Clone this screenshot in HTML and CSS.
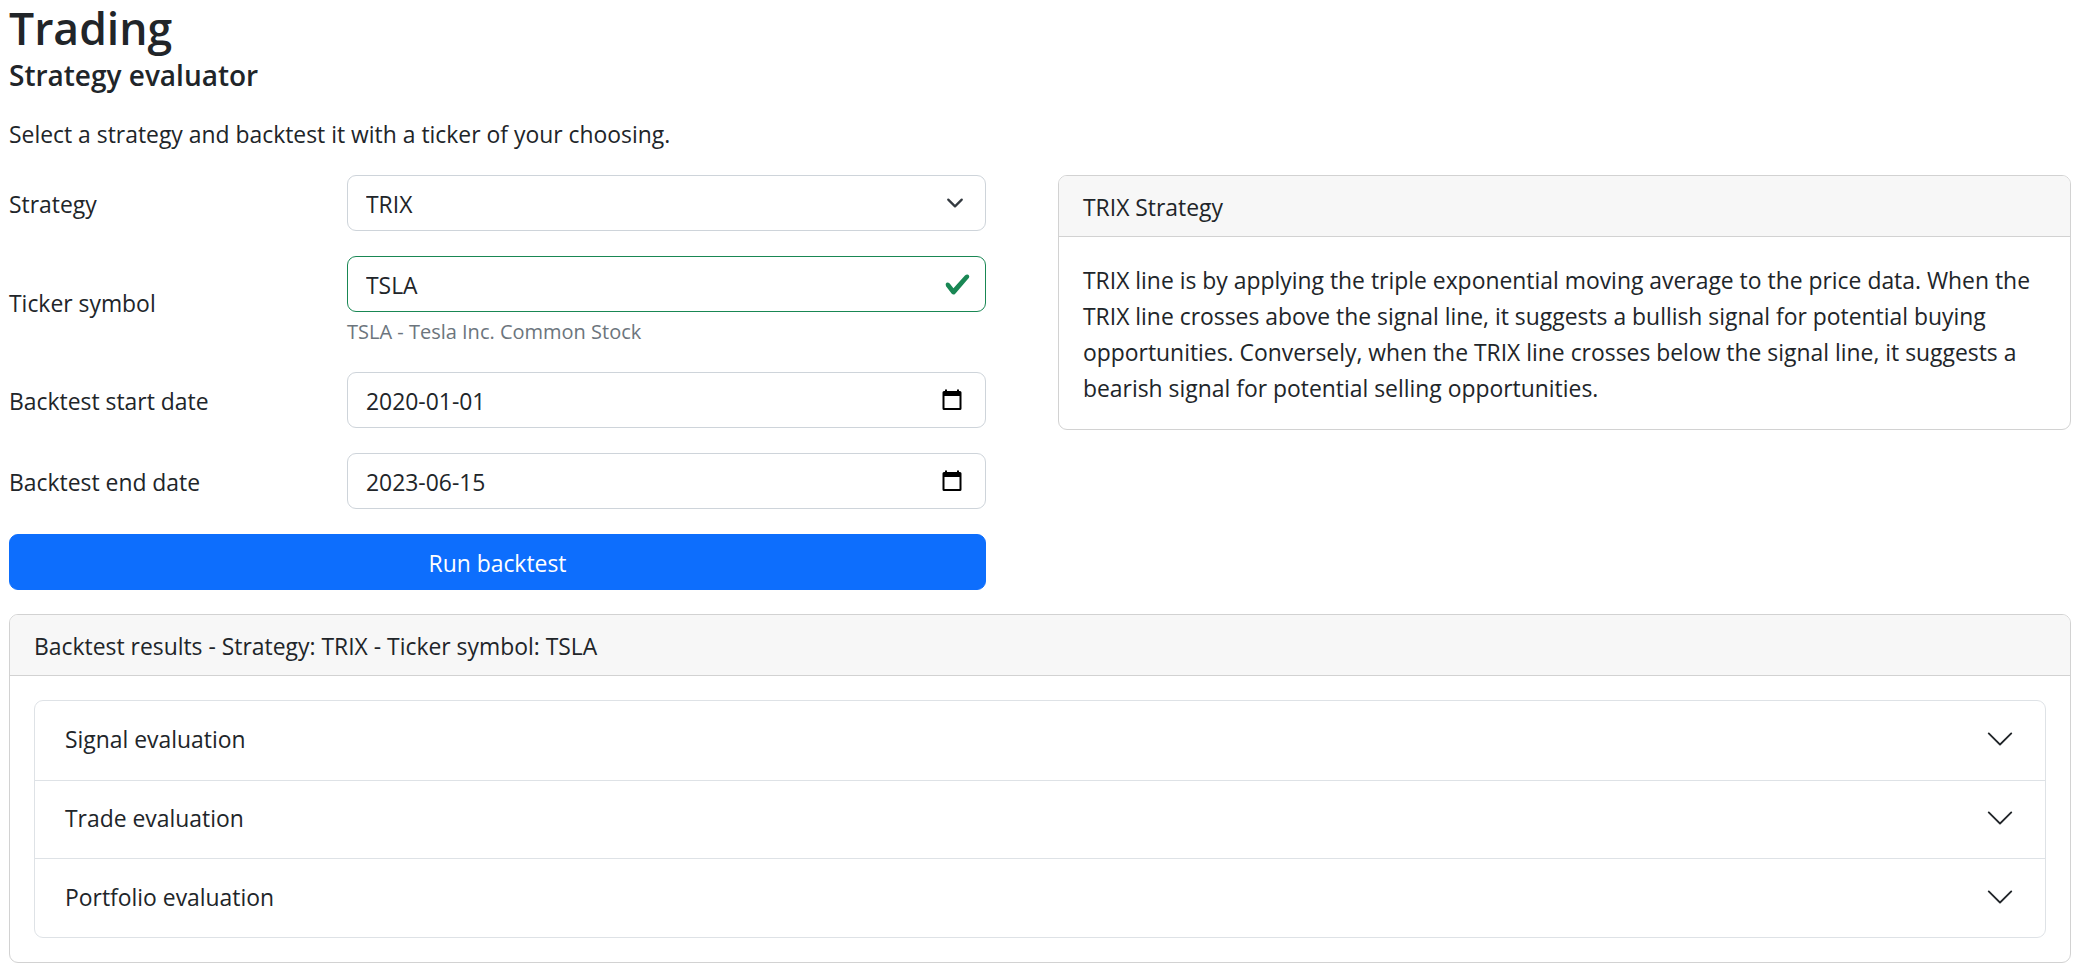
FILE: index.html
```html
<!DOCTYPE html>
<html lang="en">
<head>
    <meta charset="UTF-8">
    <meta name="viewport" content="width=device-width, initial-scale=1.0">
    <title>Trading</title>
    <link rel="stylesheet" href="styles.css">
</head>
<body>
    <h1 class="page-title">Trading</h1>
    <h5 class="page-subtitle">Strategy evaluator</h5>
    <p class="intro">Select a strategy and backtest it with a ticker of your choosing.</p>

    <div class="top-row">
        <form class="backtest-form">
            <div class="field">
                <label class="field-label" for="strategy">Strategy</label>
                <div class="field-control">
                    <select class="input input-select" id="strategy">
                        <option>TRIX</option>
                    </select>
                </div>
            </div>
            <div class="field">
                <label class="field-label" for="ticker">Ticker symbol</label>
                <div class="field-control">
                    <input class="input input-valid" id="ticker" type="text" value="TSLA">
                    <div class="field-help">TSLA - Tesla Inc. Common Stock</div>
                </div>
            </div>
            <div class="field">
                <label class="field-label" for="startDate">Backtest start date</label>
                <div class="field-control">
                    <input class="input input-date" id="startDate" type="text" value="2020-01-01">
                </div>
            </div>
            <div class="field">
                <label class="field-label" for="endDate">Backtest end date</label>
                <div class="field-control">
                    <input class="input input-date" id="endDate" type="text" value="2023-06-15">
                </div>
            </div>
            <button class="run-button" type="button">Run backtest</button>
        </form>

        <div class="card strategy-card">
            <div class="card-header">TRIX Strategy</div>
            <div class="card-body">TRIX line is by applying the triple exponential moving average to the price data. When the TRIX line crosses above the signal line, it suggests a bullish signal for potential buying opportunities. Conversely, when the TRIX line crosses below the signal line, it suggests a bearish signal for potential selling opportunities.</div>
        </div>
    </div>

    <div class="card results-card">
        <div class="card-header">Backtest results - Strategy: TRIX - Ticker symbol: TSLA</div>
        <div class="card-body">
            <div class="accordion">
                <div class="accordion-item">
                    <span>Signal evaluation</span>
                    <svg class="accordion-icon" viewBox="0 0 16 16"><path fill="#212529" fill-rule="evenodd" d="M1.646 4.646a.5.5 0 0 1 .708 0L8 10.293l5.646-5.647a.5.5 0 0 1 .708.708l-6 6a.5.5 0 0 1-.708 0l-6-6a.5.5 0 0 1 0-.708z"/></svg>
                </div>
                <div class="accordion-item">
                    <span>Trade evaluation</span>
                    <svg class="accordion-icon" viewBox="0 0 16 16"><path fill="#212529" fill-rule="evenodd" d="M1.646 4.646a.5.5 0 0 1 .708 0L8 10.293l5.646-5.647a.5.5 0 0 1 .708.708l-6 6a.5.5 0 0 1-.708 0l-6-6a.5.5 0 0 1 0-.708z"/></svg>
                </div>
                <div class="accordion-item">
                    <span>Portfolio evaluation</span>
                    <svg class="accordion-icon" viewBox="0 0 16 16"><path fill="#212529" fill-rule="evenodd" d="M1.646 4.646a.5.5 0 0 1 .708 0L8 10.293l5.646-5.647a.5.5 0 0 1 .708.708l-6 6a.5.5 0 0 1-.708 0l-6-6a.5.5 0 0 1 0-.708z"/></svg>
                </div>
            </div>
        </div>
    </div>
</body>
</html>
```

FILE: styles.css
```css
* {
    box-sizing: border-box;
}

body {
    font-family: "Open Sans", "Noto Sans", sans-serif;
    font-size: 22.9px;
    line-height: 36px;
    margin: 0;
    padding: 0 3px 3px 9px;
    background-color: #fff;
    color: #212529;
}

.page-title {
    font-size: 44.5px;
    font-weight: 600;
    line-height: 56px;
    margin: 0 0 2px;
}

.page-subtitle {
    font-size: 28px;
    font-weight: 600;
    line-height: 34px;
    margin: 0 0 25px;
}

.intro {
    margin: 0 0 22px;
}

.top-row {
    display: flex;
    gap: 72px;
    align-items: flex-start;
}

.backtest-form {
    width: 977px;
    flex: none;
}

.field {
    display: flex;
    align-items: center;
    margin-bottom: 25px;
}

.field-label {
    width: 338px;
    padding-top: 4px;
    flex: none;
}

.field-control {
    flex: 1;
}

.input {
    display: block;
    width: 100%;
    height: 56px;
    padding: 11px 18px 8px;
    font-family: inherit;
    font-size: inherit;
    color: #212529;
    background-color: #fff;
    background-repeat: no-repeat;
    border: 1px solid #ced4da;
    border-radius: 9px;
    outline: none;
    appearance: none;
}

.input-select {
    background-image: url("data:image/svg+xml,%3csvg xmlns='http://www.w3.org/2000/svg' viewBox='0 0 16 16'%3e%3cpath fill='none' stroke='%23343a40' stroke-linecap='round' stroke-linejoin='round' stroke-width='2' d='m2 5 6 6 6-6'/%3e%3c/svg%3e");
    background-position: right 18px center;
    background-size: 24px 18px;
}

.input-valid {
    border-color: #198754;
    background-image: url("data:image/svg+xml,%3csvg xmlns='http://www.w3.org/2000/svg' viewBox='0 0 8 8'%3e%3cpath fill='%23198754' d='M2.3 6.73.6 4.53c-.4-1.04.46-1.4 1.1-.8l1.1 1.4 3.4-3.8c.6-.63 1.6-.27 1.2.7l-4 4.6c-.43.5-.8.4-1.1.1z'/%3e%3c/svg%3e");
    background-position: right 14px center;
    background-size: 27px 27px;
}

.input-date {
    background-image: url("data:image/svg+xml,%3csvg xmlns='http://www.w3.org/2000/svg' viewBox='0 0 24 24'%3e%3cpath fill='%23000' fill-rule='evenodd' d='M5 1.500h2V3h10V1.500h2V3h1a1.500 1.500 0 0 1 1.500 1.500v16a1.500 1.500 0 0 1-1.500 1.500H4a1.500 1.500 0 0 1-1.500-1.500v-16A1.500 1.500 0 0 1 4 3h1zM4.500 8v12h15V8z'/%3e%3c/svg%3e");
    background-position: right 21px center;
    background-size: 24px 24px;
}

.field-help {
    margin-top: 5px;
    font-size: 20px;
    line-height: 30px;
    color: #6c757d;
}

.run-button {
    display: block;
    width: 100%;
    height: 56px;
    padding: 2px 0 0;
    font-family: inherit;
    font-size: inherit;
    color: #fff;
    background-color: #0d6efd;
    border: 1px solid #0d6efd;
    border-radius: 9px;
    cursor: pointer;
}

.card {
    border: 1px solid #d2d2d2;
    border-radius: 9px;
    background-color: #fff;
    overflow: hidden;
}

.strategy-card {
    flex: 1;
}

.results-card {
    margin-top: 24px;
}

.card-header {
    padding: 14px 24px 10px;
    background-color: #f7f7f7;
    border-bottom: 1px solid #d2d2d2;
}

.card-body {
    padding: 26px 24px 22px;
}

.results-card .card-body {
    padding: 24px;
}

.accordion {
    border: 1px solid #dee2e6;
    border-radius: 9px;
}

.accordion-item {
    display: flex;
    align-items: center;
    justify-content: space-between;
    height: 78.67px;
    padding: 0 30px;
    border-top: 1px solid #dee2e6;
}

.accordion-item:first-child {
    border-top: none;
}

.accordion-icon {
    width: 30px;
    height: 30px;
    margin-top: -2px;
    flex: none;
}
```
